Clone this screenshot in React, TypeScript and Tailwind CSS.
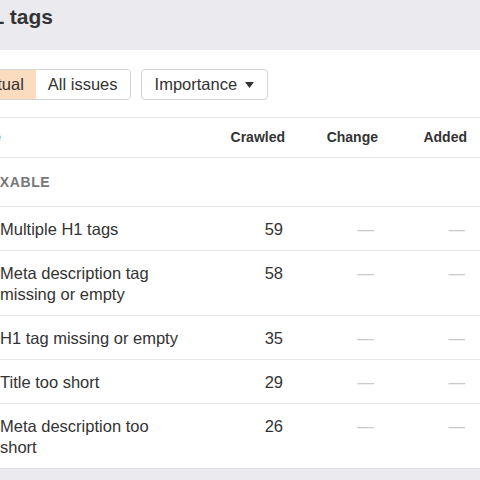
import React from "react";

type Row = { name: string; crawled: number };

const rows: Row[] = [
  { name: "Multiple H1 tags", crawled: 59 },
  { name: "Meta description tag missing or empty", crawled: 58 },
  { name: "H1 tag missing or empty", crawled: 35 },
  { name: "Title too short", crawled: 29 },
  { name: "Meta description too short", crawled: 26 },
];

export default function App() {
  return (
    <div
      className="h-[480px] w-[480px] overflow-hidden bg-[#ebebef] text-[#333]"
      style={{ fontFamily: '"Liberation Sans", Arial, sans-serif' }}
    >
      <div className="-ml-[60px] w-[560px]">
        <header className="h-[50px] pl-[6px] pt-[5px]">
          <h1 className="text-[21px] font-bold leading-[24px] text-[#333]">HTML tags</h1>
        </header>

        <section className="border-b border-[#dcdcdf] bg-white pl-[25px] pt-[19px]">
          <div className="flex items-center gap-[10px]">
            <div className="flex h-[31px] overflow-hidden rounded-[4px] border border-[#d4d4d4] text-[16.5px]">
              <button className="bg-[#fcdcbe] px-[12px] leading-[29px]">Actual</button>
              <button className="bg-white px-[12px] leading-[29px]">All issues</button>
            </div>
            <button className="flex h-[31px] items-center gap-[8px] rounded-[4px] border border-[#d4d4d4] bg-white pl-[13px] pr-[13px] text-[16.5px]">
              Importance
              <Caret />
            </button>
          </div>

          <div className="mt-[17px] border-t border-[#e6e6e6]">
            <div className="flex h-[40px] items-center border-b border-[#e6e6e6] text-[14px] font-bold">
              <div className="w-[225px]">Issue</div>
              <div className="w-[95px] text-right">Crawled</div>
              <div className="w-[93px] text-right">Change</div>
              <div className="w-[89px] text-right">Added</div>
            </div>

            <div className="flex h-[49px] items-center border-b border-[#e6e6e6]">
              <span className="-ml-[1px] text-[14px] font-bold uppercase tracking-[0.6px] text-[#777]">
                Indexable
              </span>
            </div>

            {rows.map((r, i) => (
              <div
                key={r.name}
                className={
                  "flex pb-[10px] pt-[12px] text-[16.5px] leading-[21px] " +
                  (i < rows.length - 1 ? "border-b border-[#e6e6e6]" : "")
                }
              >
                <div className="w-[225px] pl-[35px] pr-[4px]">{r.name}</div>
                <div className="w-[93px] text-right">{r.crawled}</div>
                <div className="w-[93px] pr-[2px] text-right text-[#cacaca]">—</div>
                <div className="w-[90px] pr-[1px] text-right text-[#cacaca]">—</div>
              </div>
            ))}
          </div>
        </section>
      </div>
    </div>
  );
}

function Caret() {
  return (
    <svg width="9" height="6" viewBox="0 0 9 6" aria-hidden>
      <path d="M0 0h9L4.5 6z" fill="#333" />
    </svg>
  );
}
